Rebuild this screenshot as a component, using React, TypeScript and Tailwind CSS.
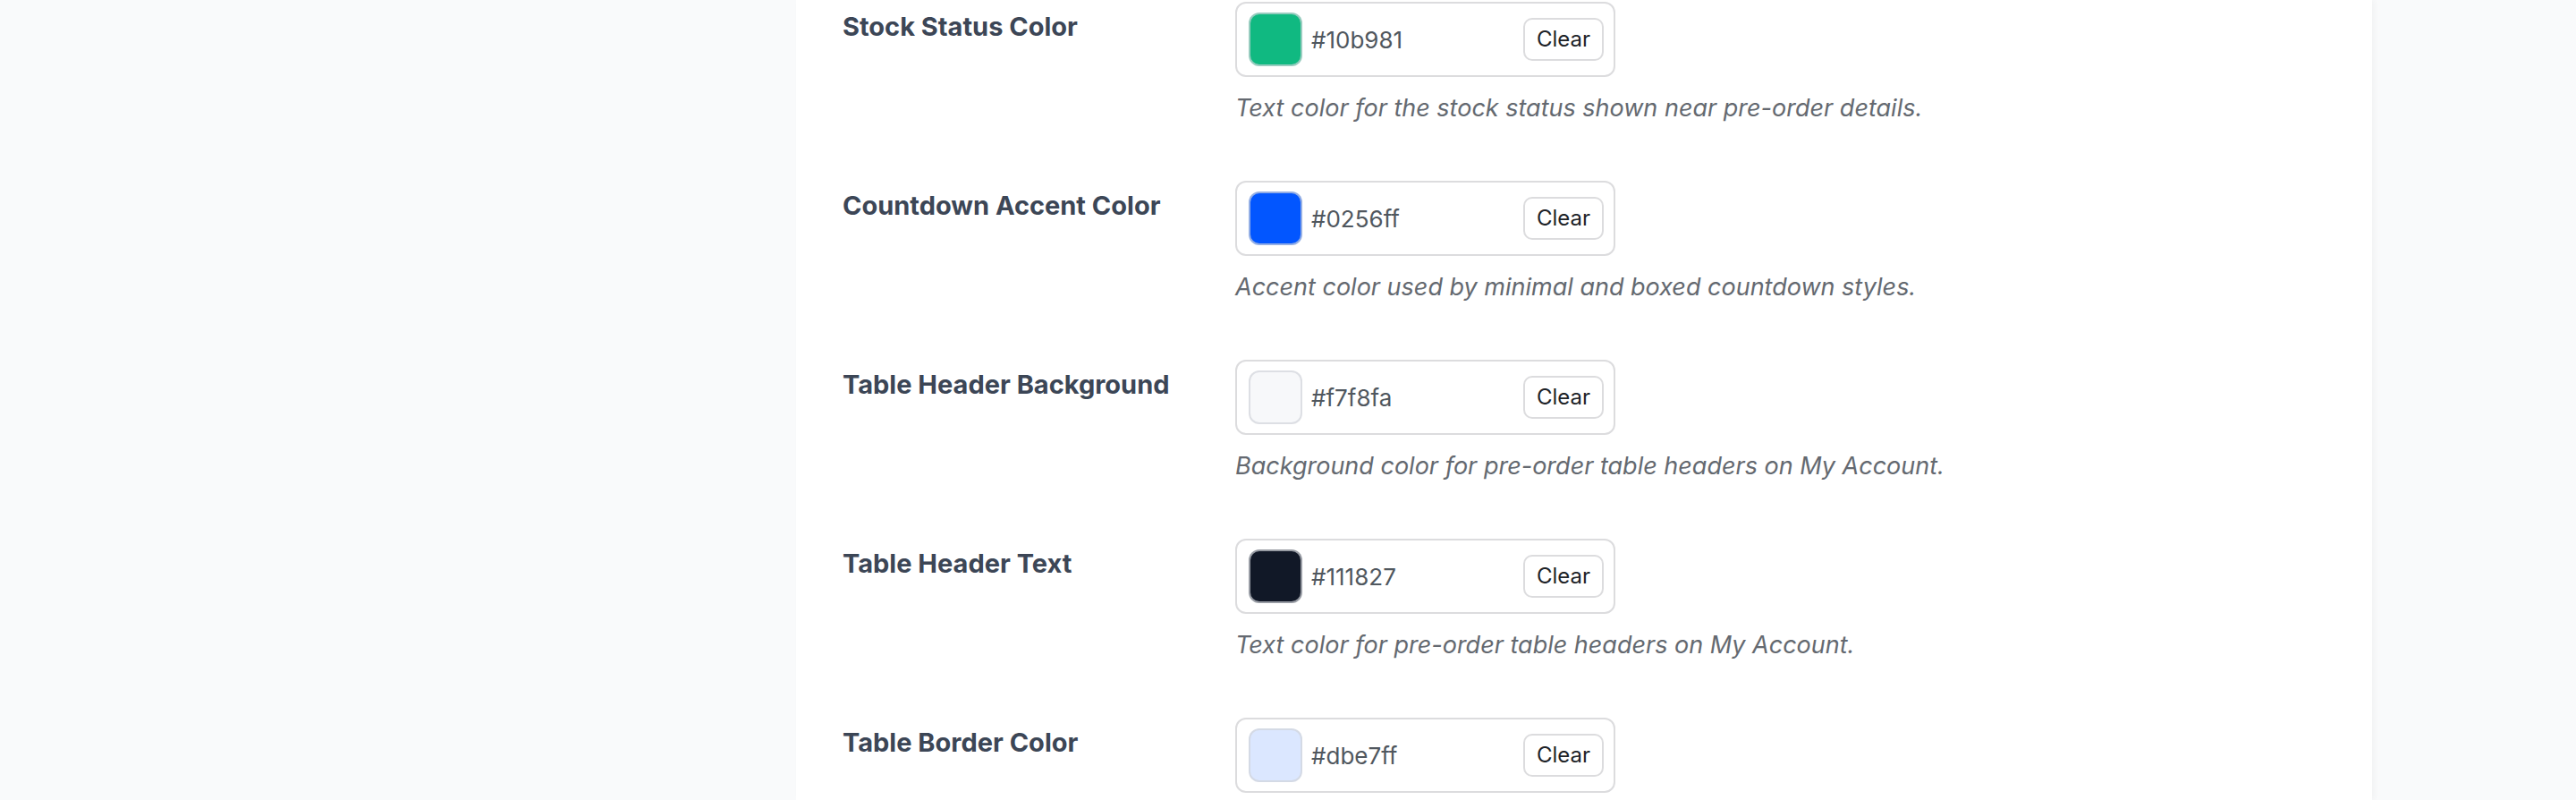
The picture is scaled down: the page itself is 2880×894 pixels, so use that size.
const rows = [
  { label: 'Stock Status Color', value: '#10b981', desc: 'Text color for the stock status shown near pre-order details.' },
  { label: 'Countdown Accent Color', value: '#0256ff', desc: 'Accent color used by minimal and boxed countdown styles.' },
  { label: 'Table Header Background', value: '#f7f8fa', desc: 'Background color for pre-order table headers on My Account.' },
  { label: 'Table Header Text', value: '#111827', desc: 'Text color for pre-order table headers on My Account.' },
  { label: 'Table Border Color', value: '#dbe7ff', desc: 'Border color for pre-order tables on My Account.' },
]

function ColorField({ value }: { value: string }) {
  return (
    <div className="flex items-center w-[425px] h-[84px] rounded-[12px] border-2 border-[#dcdcde] bg-white pl-[13px] pr-[11px]">
      <div
        className="w-[60px] h-[60px] rounded-[12px] border-2 border-[rgba(210,212,218,0.7)]"
        style={{ background: value }}
      ></div>
      <div className="ml-[10px] text-[26px] text-[#50575e]">{value}</div>
      <button className="ml-auto h-[48px] px-[13px] rounded-[10px] border-2 border-[#dcdcde] bg-white text-[24px] text-[#1d2327] leading-none">
        Clear
      </button>
    </div>
  )
}

export default function App() {
  return (
    <div className="h-screen overflow-hidden bg-[#f9fafb] flex" style={{ fontFamily: 'Inter, "Noto Sans", sans-serif' }}>
      <div className="ml-[890px] w-[1762px] bg-white pl-[52px] shadow-[3px_0_6px_rgba(0,0,0,0.03)] overflow-hidden">
        <div className="pt-[2px]">
          {rows.map(r => (
            <div key={r.label} className="grid grid-cols-[439px_1fr] h-[200px]">
              <div className="pt-[9px] text-[29px] font-bold text-[#3c4656] leading-[38px] whitespace-nowrap">{r.label}</div>
              <div>
                <ColorField value={r.value} />
                <p className="mt-[17px] text-[27px] italic text-[#646970] leading-[36px]">{r.desc}</p>
              </div>
            </div>
          ))}
        </div>
      </div>
    </div>
  )
}
